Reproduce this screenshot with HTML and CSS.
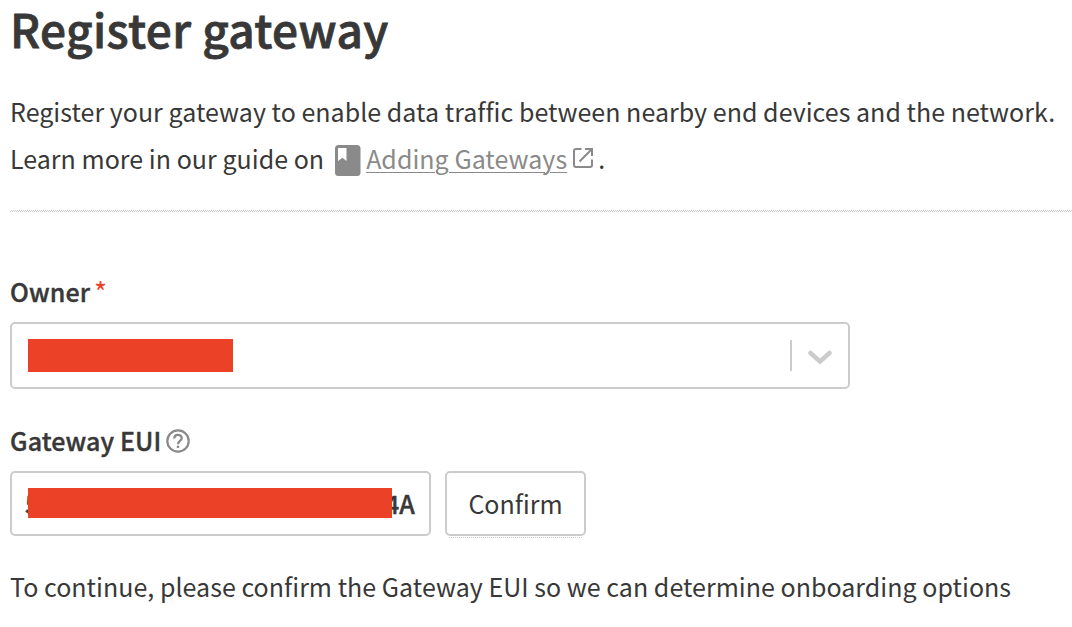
FILE: index.html
```html
<!DOCTYPE html>
<html lang="en">
<head>
<meta charset="utf-8">
<title>Register gateway</title>
<link rel="stylesheet" href="styles.css">
</head>
<body>
<main class="page">
  <h1 class="title">Register gateway</h1>
  <p class="intro"><span class="line">Register your gateway to enable data traffic between nearby end devices and the network.</span><span class="line"><span>Learn more in our guide on</span><svg class="book" viewBox="0 0 26 31"><path fill="#8a8a8a" fill-rule="evenodd" d="M3.500 0h18.500q3.500 0 3.500 3.500v24q0 3.500-3.500 3.500H3.500Q0 31 0 27.500v-24Q0 0 3.500 0zM3 3v13l4.500-3.200L11.500 16V3z"/></svg><a class="link">Adding Gateways</a><svg class="external" viewBox="0 0 20 20"><path fill="none" stroke="#8a8a8a" stroke-width="2" d="M8.500 1H3Q1 1 1 3v14q0 2 2 2h14q2 0 2-2v-5.500M12 1h7v7M19 1L6.500 13.500"/></svg><span class="dot">.</span></span></p>
  <div class="divider"></div>
  <form class="form">
    <div class="label"><span>Owner</span><span class="required">*</span></div>
    <div class="select"><span class="mask mask-owner"></span><span class="separator"></span><svg class="chevron" viewBox="0 0 24 15"><path fill="none" stroke="#ccc" stroke-width="4.500" stroke-linecap="round" d="M2.500 3L12 11.500 21.500 3"/></svg></div>
    <div class="label label-eui"><span>Gateway EUI</span><svg class="help" viewBox="0 0 24 24"><circle cx="12" cy="12" r="10.700" fill="none" stroke="#8a8a8a" stroke-width="2.200"/><path fill="none" stroke="#8a8a8a" stroke-width="2.300" d="M8.300 9.500C8.300 4.600 15.700 4.600 15.700 9.300C15.700 12 12 12 12 15.200"/><path fill="#8a8a8a" d="M10.800 16.700h2.400V19h-2.400z"/></svg></div>
    <div class="row">
      <div class="input"><span class="first">5</span><span class="mask mask-eui"></span><span class="last">4A</span></div>
      <button class="confirm" type="button"><span>Confirm</span></button>
    </div>
    <p class="note">To continue, please confirm the Gateway EUI so we can determine onboarding options</p>
  </form>
</main>
</body>
</html>
```
FILE: styles.css
```css
* { box-sizing: border-box; }
body { margin: 0; background: #fff; color: #383838; font: 25px/47px "Noto Sans CJK SC", "Noto Sans", sans-serif; }
.page { height: 627px; padding-left: 10px; white-space: nowrap; }
svg { flex: none; }
.title { margin: 0; height: 88px; font-size: 46px; line-height: 56px; font-weight: 500; letter-spacing: 0.38px; -webkit-text-stroke: 0.8px #383838; }
.intro { margin: 0; height: 122px; letter-spacing: 0.03px; }
.line { display: flex; align-items: center; height: 47px; }
.book { width: 26px; height: 31px; margin: 3px 5px 0 11px; }
.link { color: #8a8a8a; text-decoration: underline; text-decoration-thickness: 1px; text-underline-offset: 3px; }
.external { width: 20px; height: 20px; margin: -1px 0 0 6px; }
.dot { margin-left: 5px; }
.divider { height: 2px; background: repeating-conic-gradient(#ccc 0 25%, #fff 0 50%) 0 0 / 2px 2px; }
.form { padding-top: 59px; }
.label { display: flex; height: 51px; line-height: 40px; font-weight: 500; letter-spacing: 0.1px; -webkit-text-stroke: 0.4px currentColor; }
.required { margin-left: 4px; color: #eb4127; font-size: 28px; font-weight: 400; -webkit-text-stroke: 0; }
.select { display: flex; align-items: center; width: 840px; height: 67px; padding: 0 16px; border: 2px solid #ccc; border-radius: 5px; }
.mask { flex: none; background: #eb4127; }
.mask-owner { width: 205px; height: 33px; }
.separator { width: 2px; height: 31px; margin-left: auto; background: #ccc; }
.chevron { width: 24px; height: 15px; margin: 3px 0 0 16px; }
.label-eui { margin-top: 31px; }
.help { width: 24px; height: 24px; margin: 9px 0 0 5px; }
.row { display: flex; gap: 14px; }
.input { display: flex; align-items: center; width: 421px; height: 65px; padding-left: 13px; border: 2px solid #ccc; border-radius: 5px; font-weight: 500; -webkit-text-stroke: 0.4px #383838; }
.first { width: 3px; }
.mask-eui { position: relative; z-index: 1; width: 364px; height: 30px; margin-top: -1px; }
.last { margin-left: -7px; }
.confirm { position: relative; width: 141px; height: 65px; padding: 0; border: 2px solid #ccc; border-radius: 5px; background: #fff; color: #383838; font: inherit; }
/* dotted shadow under the button */
.confirm::after { content: ""; position: absolute; left: 2px; right: 2px; bottom: -4px; height: 1px; background: repeating-linear-gradient(90deg, #ccc 0 1px, #fff 1px 2px); }
.note { margin: 27px 0 0; letter-spacing: 0.03px; }
```
